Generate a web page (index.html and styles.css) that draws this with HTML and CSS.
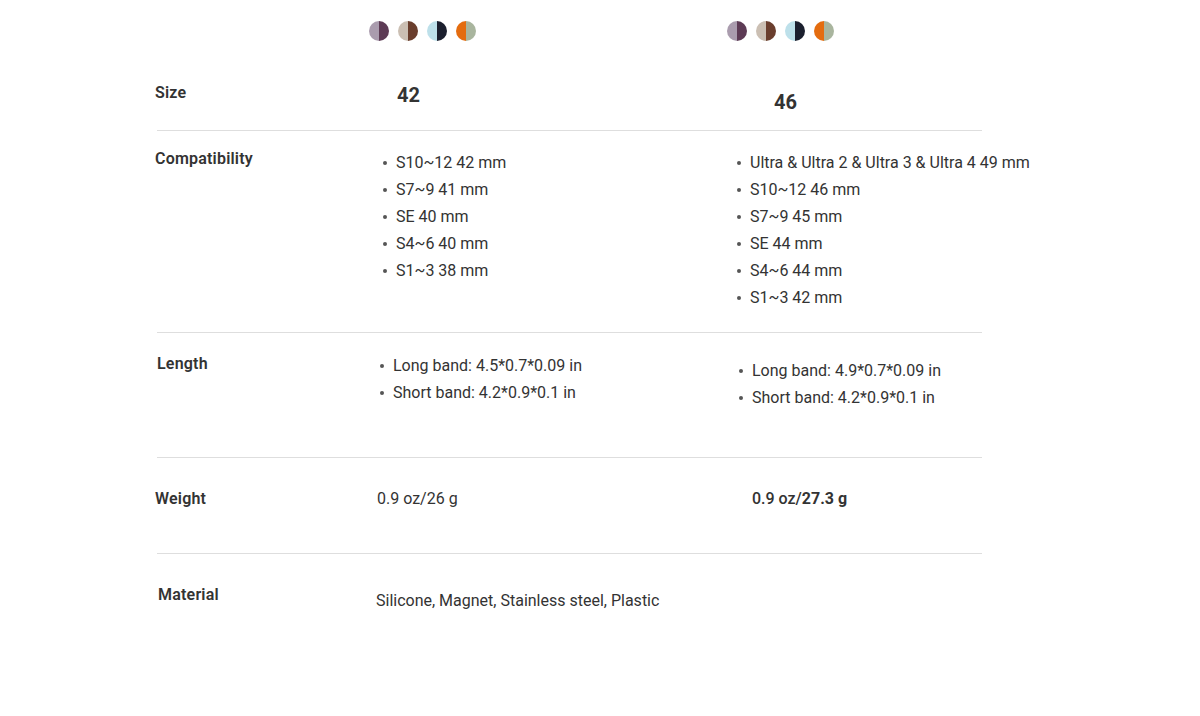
FILE: index.html
```html
<!DOCTYPE html>
<html lang="en">
<head>
<meta charset="utf-8">
<title>Specs</title>
<link rel="stylesheet" href="styles.css">
</head>
<body>
<div class="specs">
  <div class="row row-dots">
    <div class="label"></div>
    <div class="cell">
      <div class="dots">
        <span class="dot d-purple"></span>
        <span class="dot d-brown"></span>
        <span class="dot d-blue"></span>
        <span class="dot d-orange"></span>
      </div>
    </div>
    <div class="cell">
      <div class="dots">
        <span class="dot d-purple"></span>
        <span class="dot d-brown"></span>
        <span class="dot d-blue"></span>
        <span class="dot d-orange"></span>
      </div>
    </div>
  </div>

  <div class="row row-size lined">
    <div class="label">Size</div>
    <div class="cell"><div class="size-val s42">42</div></div>
    <div class="cell"><div class="size-val s46">46</div></div>
  </div>

  <div class="row row-compat lined">
    <div class="label">Compatibility</div>
    <div class="cell">
      <ul class="bullets b-c1">
        <li>S10~12 42 mm</li>
        <li>S7~9 41 mm</li>
        <li>SE 40 mm</li>
        <li>S4~6 40 mm</li>
        <li>S1~3 38 mm</li>
      </ul>
    </div>
    <div class="cell">
      <ul class="bullets b-c2">
        <li>Ultra &amp; Ultra 2 &amp; Ultra 3 &amp; Ultra 4 49 mm</li>
        <li>S10~12 46 mm</li>
        <li>S7~9 45 mm</li>
        <li>SE 44 mm</li>
        <li>S4~6 44 mm</li>
        <li>S1~3 42 mm</li>
      </ul>
    </div>
  </div>

  <div class="row row-length lined">
    <div class="label label-shift">Length</div>
    <div class="cell">
      <ul class="bullets b-l1">
        <li>Long band: 4.5*0.7*0.09 in</li>
        <li>Short band: 4.2*0.9*0.1 in</li>
      </ul>
    </div>
    <div class="cell">
      <ul class="bullets b-l2">
        <li>Long band: 4.9*0.7*0.09 in</li>
        <li>Short band: 4.2*0.9*0.1 in</li>
      </ul>
    </div>
  </div>

  <div class="row row-weight lined">
    <div class="label">Weight</div>
    <div class="cell"><div class="plain">0.9 oz/26 g</div></div>
    <div class="cell"><div class="plain w2">0.9 oz/<b>27.3 g</b></div></div>
  </div>

  <div class="row row-material">
    <div class="label label-shift2">Material</div>
    <div class="cell"><div class="plain mat">Silicone, Magnet, Stainless steel, Plastic</div></div>
    <div class="cell"></div>
  </div>
</div>
</body>
</html>
```
FILE: styles.css
```css
* { box-sizing: border-box; }
html, body { margin: 0; padding: 0; background: #fff; }
body {
  font-family: Roboto, "Liberation Sans", sans-serif;
  color: #333;
}
.specs {
  padding-left: 155px;
  width: 1200px;
}
.row {
  display: grid;
  grid-template-columns: 222px 358px 1fr;
  width: 827px;
}
.lined {
  border-bottom: 1px solid #dedede;
  margin-left: 2px;
  width: 825px;
  grid-template-columns: 220px 358px 1fr;
}
.cell { white-space: nowrap; }
.label {
  font-size: 16px;
  font-weight: 600;
  line-height: 20px;
  color: #333;
  margin-left: -2px;
  letter-spacing: 0.2px;
}
.label-shift { margin-left: 0; }
.label-shift2 { margin-left: 3px; }

.row-dots { height: 41px; padding-top: 21px; }
.dots { display: flex; gap: 9px; margin-left: -8px; }
.dot {
  width: 20px; height: 20px; border-radius: 50%;
  display: block;
}
.d-purple { background: linear-gradient(90deg, #aa9cae 50%, #5d3b55 50%); }
.d-brown { background: linear-gradient(90deg, #cbbfb3 50%, #6a3e2d 50%); }
.d-blue { background: linear-gradient(90deg, #bde0ea 50%, #1b1f2e 50%); }
.d-orange { background: linear-gradient(90deg, #e46c0f 50%, #a9b59e 50%); }

.row-size { height: 90px; padding-top: 42px; }
.size-val { font-size: 20px; font-weight: 700; line-height: 24px; color: #333; }
.s42 { margin-left: 20px; margin-top: 0px; }
.s46 { margin-left: 39px; margin-top: 7px; }

.row-compat { height: 202px; padding-top: 18px; }
.bullets { list-style: none; margin: 0; padding: 0; font-size: 16px; line-height: 27px; color: #333; }
.bullets li { position: relative; }
.bullets li::before {
  content: "";
  position: absolute;
  top: 12px;
  width: 4px; height: 4px; border-radius: 50%;
  background: #555;
}
.b-c1 { padding-left: 19px; margin-top: 0; }
.b-c1 li::before { left: -13px; }
.b-c2 { padding-left: 15px; margin-top: 0; }
.b-c2 li::before { left: -13px; }

.row-length { height: 125px; padding-top: 21px; }
.b-l1 { padding-left: 16px; margin-top: -2px; }
.b-l1 li::before { left: -13px; }
.b-l2 { padding-left: 17px; margin-top: 3px; }
.b-l2 li::before { left: -13px; }

.row-weight { height: 96px; padding-top: 31px; }
.plain { font-size: 16px; line-height: 20px; color: #333; }
.w2 { margin-left: 17px; font-weight: 500; }
.w2 b { font-weight: 700; }

.row-material { height: 100px; padding-top: 31px; }
.mat { margin-top: 6px; margin-left: -1px; }
```
